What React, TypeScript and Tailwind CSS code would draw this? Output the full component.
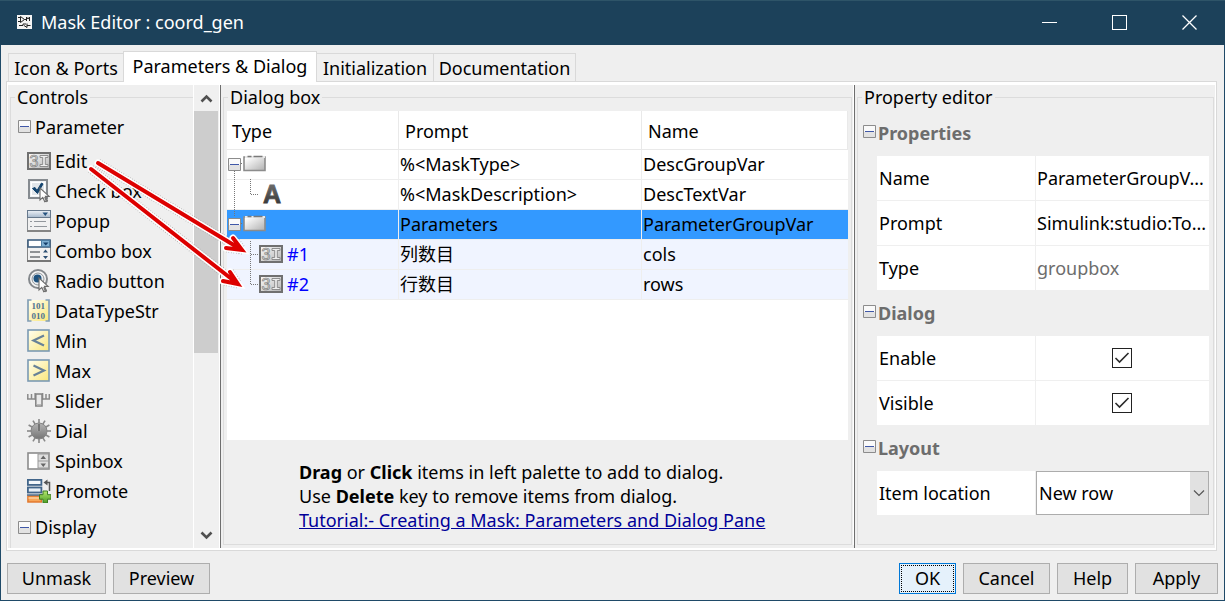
import React, { useState, type ReactNode } from "react";

function ToggleBox({ y = 0 }: { y?: number }) {
  return (
    <g>
      <rect x="0" y={y} width="13" height="13" rx="1" fill="#8c8c8c" />
      <rect x="1" y={y + 1} width="11" height="11" fill="#fafafa" />
      <rect x="1" y={y + 7} width="11" height="5" fill="#e2e2e2" />
      <rect x="2" y={y + 6} width="9" height="1" fill="#4058a8" />
    </g>
  );
}

function Toggle({ label }: { label: string }) {
  return (
    <button type="button" aria-label={label} className="block h-[13px] w-[13px] shrink-0">
      <svg width="13" height="13" viewBox="0 0 13 13" className="block">
        <ToggleBox />
      </svg>
    </button>
  );
}

function EditIcon() {
  return (
    <svg width="24" height="24" viewBox="0 0 24 24" className="block shrink-0">
      <defs>
        <linearGradient id="editFill" x1="0" y1="0" x2="1" y2="1">
          <stop offset="0" stopColor="#fbfbfb" />
          <stop offset="1" stopColor="#b4b4b4" />
        </linearGradient>
      </defs>
      <rect x="1" y="4" width="22" height="16" fill="url(#editFill)" stroke="#707070" strokeWidth="2" />
      <text
        x="2.5"
        y="17.500"
        fontSize="16"
        fontFamily="Liberation Sans, sans-serif"
        fill="#e4e4e4"
        stroke="#7d7d7d"
        strokeWidth="0.7"
      >
        3
      </text>
      <path d="M13 6.500h8v2h-2.700v7h2.700v2h-8v-2h2.700v-7H13z" fill="#eeeeee" stroke="#858585" strokeWidth="0.900" />
    </svg>
  );
}

function Cursor({ x, y }: { x: number; y: number }) {
  return (
    <g transform={`translate(${x} ${y})`}>
      <path d="M0 0v12l2.8-2.6 2 4.4 2.6-1.2-2-4.2h3.8z" fill="#fff" stroke="#6b6b6b" strokeWidth="1.1" />
      <path d="M5 9l2 5" stroke="#777" strokeWidth="2" />
    </g>
  );
}

function CheckIcon() {
  return (
    <svg width="24" height="24" viewBox="0 0 24 24" className="block shrink-0">
      <rect x="2" y="1" width="18" height="18" fill="#f0f3f5" stroke="#868b90" strokeWidth="2" />
      <rect x="4.5" y="3.5" width="13" height="13" fill="#e1e6ea" stroke="#fff" />
      <path d="M5.500 9.500l2.500-1 2 3L14.500 4l1.500 1L10.500 14.500z" fill="#15456f" stroke="#15456f" />
      <Cursor x={13} y={9} />
    </svg>
  );
}

function PopupIcon() {
  return (
    <svg width="24" height="24" viewBox="0 0 24 24" className="block shrink-0">
      <defs>
        <linearGradient id="popupBar" x1="0" y1="0" x2="0" y2="1">
          <stop offset="0" stopColor="#eef2f7" />
          <stop offset="1" stopColor="#a5b8cc" />
        </linearGradient>
      </defs>
      <rect x="0.500" y="1.500" width="23" height="21" fill="#f1f1f1" stroke="#8a8f94" />
      <rect x="0.5" y="1.5" width="23" height="7" fill="url(#popupBar)" stroke="#66788c" />
      <path d="M15.500 3.500h5.500l-2.700 3.500z" fill="#24527f" />
      <path d="M3 12.500h2M7 12.500h12M3 17.500h2M7 17.500h13" stroke="#92979c" />
      <path d="M0 22h24" stroke="#858585" strokeWidth="2" />
    </svg>
  );
}

function ComboIcon() {
  return (
    <svg width="24" height="24" viewBox="0 0 24 24" className="block shrink-0">
      <rect x="0.5" y="1.5" width="23" height="21" fill="#f1f1f1" stroke="#858585" />
      <rect x="1" y="1" width="22" height="7" fill="#fff" stroke="#3f5f80" strokeWidth="1.6" />
      <rect x="14.500" y="1.500" width="8" height="6" fill="#7fb0d3" stroke="#4e7ea4" />
      <path d="M16 3.500h5.500l-2.700 3z" fill="#153f6b" />
      <path d="M3 13h10M3 18h10" stroke="#6f7377" strokeWidth="1.6" />
      <path d="M16 13.500l2.500-3 2.500 3zM16 17l2.500 3 2.500-3z" fill="#2c4f73" />
      <path d="M0 22h24" stroke="#777" strokeWidth="2" />
    </svg>
  );
}

function RadioIcon() {
  return (
    <svg width="24" height="24" viewBox="0 0 24 24" className="block shrink-0">
      <circle cx="11" cy="10" r="9" fill="#f7f7f7" stroke="#84888c" strokeWidth="2" />
      <circle cx="11" cy="10" r="6" fill="#e9edf0" stroke="#8f9397" strokeWidth="1" />
      <circle cx="10.500" cy="9.500" r="4" fill="#1e527e" />
      <Cursor x={12} y={9} />
    </svg>
  );
}

function YellowGradient({ id }: { id: string }) {
  return (
    <defs>
      <linearGradient id={id} x1="0" y1="0" x2="1" y2="1">
        <stop offset="0" stopColor="#fffff2" />
        <stop offset="1" stopColor="#fbe77a" />
      </linearGradient>
    </defs>
  );
}

function DataTypeIcon() {
  return (
    <svg width="24" height="24" viewBox="0 0 24 24" className="block shrink-0">
      <YellowGradient id="dataFill" />
      <rect x="1" y="1" width="21" height="21" fill="url(#dataFill)" />
      <path d="M4.500 1H1v21h3.500M18.500 1H22v21h-3.500" fill="none" stroke="#839fb6" strokeWidth="1.700" />
      <text x="4.500" y="9.500" fontSize="9" fontWeight="700" fontFamily="Liberation Serif, serif" fill="#4d7391">
        101
      </text>
      <text x="4.500" y="19.500" fontSize="9" fontWeight="700" fontFamily="Liberation Serif, serif" fill="#4d7391">
        010
      </text>
    </svg>
  );
}

function LimitIcon({ kind }: { kind: "min" | "max" }) {
  const id = kind === "min" ? "minFill" : "maxFill";
  return (
    <svg width="24" height="24" viewBox="0 0 24 24" className="block shrink-0">
      <YellowGradient id={id} />
      <rect x="1" y="1" width="21" height="21" fill={`url(#${id})`} stroke="#7b9ab3" strokeWidth="1.600" />
      <path
        d={kind === "min" ? "M17 6.500L6.500 11.500 17 16.500" : "M6.500 6.500L17 11.500 6.500 16.500"}
        fill="none"
        stroke="#688298"
        strokeWidth="2.200"
      />
    </svg>
  );
}

function SliderIcon() {
  return (
    <svg width="24" height="24" viewBox="0 0 24 24" className="block shrink-0">
      <path d="M0.800 5v5M4.500 5v5M0 10h8M15 10h8M19 5v5M22.300 5v5" stroke="#8a8a8a" strokeWidth="1.500" fill="none" />
      <path d="M8 4v6.500M15.700 4v6.500" stroke="#8b8b8b" strokeWidth="1.300" />
      <rect x="8.800" y="5" width="6.200" height="12" fill="#eaeaea" stroke="#828282" strokeWidth="1.500" />
      <path d="M10 16h4" stroke="#aaa" strokeWidth="1.500" />
    </svg>
  );
}

function DialIcon() {
  const spokes = [0, 30, 60, 90, 120, 150, 180, 210, 240, 270, 300, 330];
  return (
    <svg width="24" height="24" viewBox="0 0 24 24" className="block shrink-0">
      <defs>
        <linearGradient id="dialFill" x1="0" y1="0" x2="0" y2="1">
          <stop offset="0" stopColor="#b4b4b4" />
          <stop offset="1" stopColor="#757575" />
        </linearGradient>
      </defs>
      {spokes.map((a) => (
        <path key={a} d="M12 0v5" stroke="#898989" strokeWidth="1.600" transform={`rotate(${a} 12 12)`} />
      ))}
      <circle cx="12" cy="12" r="8" fill="url(#dialFill)" stroke="#858585" />
      <path d="M10.500 5.500h3V12h-3z" fill="#a8a8a8" />
      <path d="M12 5v7" stroke="#5a5a5a" strokeWidth="1.300" />
    </svg>
  );
}

function SpinIcon() {
  return (
    <svg width="24" height="24" viewBox="0 0 24 24" className="block shrink-0">
      <rect x="1" y="4" width="21" height="16" fill="#fff" stroke="#8c8c8c" strokeWidth="1.600" />
      <rect x="11" y="5" width="10.500" height="14" fill="#dedede" stroke="#999" />
      <path d="M11 12h10.500" stroke="#999" />
      <path d="M13.500 10l2.800-3.500L19 10zM13.500 14.500l2.800 3.500 2.700-3.500z" fill="#666" />
    </svg>
  );
}

function PromoteIcon() {
  return (
    <svg width="24" height="24" viewBox="0 0 24 24" className="block shrink-0">
      <defs>
        <linearGradient id="plusFill" x1="0" y1="0" x2="0" y2="1">
          <stop offset="0" stopColor="#b5e86f" />
          <stop offset="1" stopColor="#4b9c24" />
        </linearGradient>
      </defs>
      <rect x="0.900" y="0.900" width="13.500" height="5" fill="#f3f7fb" stroke="#41658a" strokeWidth="1.800" />
      <rect x="0.900" y="8.500" width="13.500" height="5" fill="#e7eff7" stroke="#41658a" strokeWidth="1.800" />
      <rect x="0.900" y="17" width="13.500" height="6" fill="#f7a659" stroke="#e2762a" strokeWidth="1.400" />
      <path d="M0 16h15" stroke="#41658a" strokeWidth="1.400" />
      <path d="M1.500 19h12" stroke="#ffe1bd" />
      <path d="M19 3.500h3.500V12" fill="none" stroke="#555" strokeWidth="1.500" />
      <path d="M16.500 3.500l4-3v6z" fill="#555" />
      <path d="M16 12h4.500v3.700H24v4.500h-3.500V24H16v-3.800h-3.500v-4.500H16z" fill="url(#plusFill)" stroke="#3d7d22" />
    </svg>
  );
}

function FolderIcon() {
  return (
    <svg width="24" height="18" viewBox="0 0 24 18" className="block shrink-0">
      <defs>
        <linearGradient id="folderFill" x1="0" y1="0" x2="1" y2="1">
          <stop offset="0.100" stopColor="#ffffff" />
          <stop offset="1" stopColor="#b0b0b0" />
        </linearGradient>
      </defs>
      <path d="M1 2h21v13.500H1z" fill="url(#folderFill)" stroke="#8c8c8c" strokeWidth="1.600" />
      <path d="M2 2h20" stroke="#e8e8e8" strokeWidth="2" />
      <path d="M4.500 1.500h4M10.500 1.500h9" stroke="#7a7a7a" strokeWidth="1.600" />
    </svg>
  );
}

const palette: { label: string; icon: ReactNode }[] = [
  { label: "Edit", icon: <EditIcon /> },
  { label: "Check box", icon: <CheckIcon /> },
  { label: "Popup", icon: <PopupIcon /> },
  { label: "Combo box", icon: <ComboIcon /> },
  { label: "Radio button", icon: <RadioIcon /> },
  { label: "DataTypeStr", icon: <DataTypeIcon /> },
  { label: "Min", icon: <LimitIcon kind="min" /> },
  { label: "Max", icon: <LimitIcon kind="max" /> },
  { label: "Slider", icon: <SliderIcon /> },
  { label: "Dial", icon: <DialIcon /> },
  { label: "Spinbox", icon: <SpinIcon /> },
  { label: "Promote", icon: <PromoteIcon /> },
];

function TitleBar() {
  return (
    <header className="flex h-[45px] items-center border-t border-[#2e5468] bg-[#1c415a] pr-px pb-0.5 pl-[17px] text-white">
      <svg width="15" height="14" viewBox="0 0 15 14" className="block shrink-0">
        <rect width="15" height="14" fill="#f4f4f4" />
        <path
          d="M1 2.500h2M1 6.500h2M3.500 1.500l4 3-4 3zM7.500 4.500h2M9.500 6V2l1.500 2 1.500-2v4M2 10.500h4M6 10.500V9h3M10 8.500v4l-3-2M10 10.500h3.500"
          fill="none"
          stroke="#222"
        />
      </svg>
      <h1 className="ml-[9px] flex-1">Mask Editor : coord_gen</h1>
      <button type="button" aria-label="Minimize" className="flex h-full w-[70px] items-center justify-center">
        <svg width="15" height="15" viewBox="0 0 15 15">
          <path d="M0 7.500h15" stroke="#fff" />
        </svg>
      </button>
      <button type="button" aria-label="Maximize" className="flex h-full w-[70px] items-center justify-center">
        <svg width="15" height="15" viewBox="0 0 15 15">
          <rect x="0.500" y="0.500" width="14" height="14" fill="none" stroke="#fff" />
        </svg>
      </button>
      <button type="button" aria-label="Close" className="flex h-full w-[70px] items-center justify-center">
        <svg width="15" height="15" viewBox="0 0 15 15">
          <path d="M0.500 0.500l14 14M14.500 0.500l-14 14" stroke="#fff" strokeWidth="1.300" />
        </svg>
      </button>
    </header>
  );
}

const tabs = [
  { label: "Icon & Ports", width: "w-[115px]" },
  { label: "Parameters & Dialog", width: "w-[194px]" },
  { label: "Initialization", width: "w-[117px]" },
  { label: "Documentation", width: "w-[142px]" },
];

function TabBar() {
  return (
    <div role="tablist" className="relative z-10 -mb-px flex items-end pl-0.5">
      {tabs.map((tab, i) => (
        <button
          key={tab.label}
          type="button"
          role="tab"
          aria-selected={i === 1}
          className={`whitespace-nowrap ${tab.width} ${
            i === 1
              ? "h-[31px] border border-b-0 border-[#d9d9d9] bg-white pb-0.5"
              : `h-[29px] border-y border-[#d9d9d9] bg-[#f0f0f0] ${i === 0 ? "border-l" : "border-r"}`
          }`}
        >
          {tab.label}
        </button>
      ))}
    </div>
  );
}

function Controls() {
  return (
    <section className="flex w-[212px] shrink-0">
      <fieldset className="ml-0.5 min-w-0 flex-1 border-t border-l border-[#dcdcdc]">
        <legend className="ml-1 px-0.5">Controls</legend>
        <div className="flex h-[37px] items-center gap-1 pb-0.5 pl-[7px]">
          <Toggle label="Collapse Parameter" />
          Parameter
        </div>
        <ul>
          {palette.map((item) => (
            <li key={item.label} className="flex h-[30px] items-center pl-4">
              <button type="button" className="flex items-center gap-1 whitespace-nowrap">
                {item.icon}
                {item.label}
              </button>
            </li>
          ))}
        </ul>
        <div className="flex h-[42px] items-center gap-1 pl-[7px]">
          <Toggle label="Collapse Display" />
          Display
        </div>
      </fieldset>
      <div className="flex w-[27px] flex-col border-x border-white bg-[#f0f0f0] pr-px">
        <button type="button" aria-label="Scroll up" className="flex h-[26px] items-center justify-center">
          <svg width="13" height="9" viewBox="0 0 13 9">
            <path d="M1.500 7.500l5-5 5 5" fill="none" stroke="#505050" strokeWidth="2.600" />
          </svg>
        </button>
        <div className="flex-1">
          <div className="h-[59%] bg-[#cdcdcd]" />
        </div>
        <button type="button" aria-label="Scroll down" className="flex h-[26px] items-center justify-center">
          <svg width="13" height="9" viewBox="0 0 13 9">
            <path d="M1.500 1.500l5 5 5-5" fill="none" stroke="#505050" strokeWidth="2.600" />
          </svg>
        </button>
      </div>
    </section>
  );
}

function GroupToggle({ up, down, label }: { up?: boolean; down?: boolean; label: string }) {
  return (
    <button type="button" aria-label={label} className="block h-[29px] w-[15px] shrink-0">
      <svg width="15" height="29" viewBox="0 0 15 29" className="block">
        {up && <path d="M6.500 0v8" stroke="#777" strokeDasharray="1 1" />}
        {down && <path d="M6.500 22v7" stroke="#777" strokeDasharray="1 1" />}
        <path d="M13 14.500h2" stroke="#777" strokeDasharray="1 1" />
        <ToggleBox y={9} />
      </svg>
    </button>
  );
}

function Branch({ trunk, more }: { trunk?: boolean; more?: boolean }) {
  return (
    <svg width="31" height="30" viewBox="0 0 31 30" className="block shrink-0">
      {trunk && <path d="M6.500 0v30" stroke="#777" strokeDasharray="1 1" />}
      <path d={more ? "M22.500 2v28" : "M22.500 0v15"} stroke="#777" strokeDasharray="1 1" />
      <path d="M23 15.500h8" stroke="#777" strokeDasharray="1 1" />
    </svg>
  );
}

const rows: { type: ReactNode; prompt: string; name: string; tone: string }[] = [
  {
    type: (
      <>
        <GroupToggle down label="Collapse DescGroupVar" />
        <FolderIcon />
      </>
    ),
    prompt: "%<MaskType>",
    name: "DescGroupVar",
    tone: "bg-white",
  },
  {
    type: (
      <>
        <Branch trunk />
        <svg width="26" height="30" viewBox="0 0 26 30" className="block shrink-0 overflow-visible">
          <defs>
            <linearGradient id="letterFill" x1="0" y1="0" x2="0" y2="1">
              <stop offset="0" stopColor="#777" />
              <stop offset="1" stopColor="#2e2e2e" />
            </linearGradient>
          </defs>
          <text
            x="4"
            y="24"
            fontSize="25"
            fontWeight="700"
            fontFamily="Liberation Sans, sans-serif"
            fill="url(#letterFill)"
            stroke="url(#letterFill)"
            strokeWidth="0.800"
          >
            A
          </text>
        </svg>
      </>
    ),
    prompt: "%<MaskDescription>",
    name: "DescTextVar",
    tone: "bg-white",
  },
  {
    type: (
      <>
        <GroupToggle up label="Collapse ParameterGroupVar" />
        <FolderIcon />
      </>
    ),
    prompt: "Parameters",
    name: "ParameterGroupVar",
    tone: "bg-[#3399ff]",
  },
  {
    type: (
      <>
        <Branch more />
        <EditIcon />
        <span className="ml-1 text-[#0000ff]">#1</span>
      </>
    ),
    prompt: "列数目",
    name: "cols",
    tone: "bg-[#f0f4ff]",
  },
  {
    type: (
      <>
        <Branch />
        <EditIcon />
        <span className="ml-1 text-[#0000ff]">#2</span>
      </>
    ),
    prompt: "行数目",
    name: "rows",
    tone: "bg-[#f0f4ff]",
  },
];

function DialogBox() {
  return (
    <section className="flex min-w-0 flex-1 border-l border-[#6e6e6e] pb-[3px] pl-0.5">
      <fieldset className="flex min-w-0 flex-1 flex-col border border-[#dcdcdc] px-[3px]">
        <legend className="ml-px px-0.5">Dialog box</legend>
        <div className="mt-0.5 h-[329px] bg-white">
          <table className="w-full table-fixed border-separate border-spacing-0 text-left">
            <colgroup>
              <col className="w-[172px]" />
              <col className="w-[243px]" />
              <col />
            </colgroup>
            <thead>
              <tr className="h-[39px]">
                {["Type", "Prompt", "Name"].map((h, i) => (
                  <th
                    key={h}
                    scope="col"
                    className={`border-r border-b border-[#e9e9e9] p-0 pt-0.5 font-normal ${i === 0 ? "pl-[5px]" : "pl-1.5"}`}
                  >
                    {h}
                  </th>
                ))}
              </tr>
            </thead>
            <tbody>
              {rows.map((row) => (
                <tr key={row.name} className={`h-[30px] ${row.tone}`}>
                  <td className="border-r border-b border-[#eeeeee] p-0">
                    <div className="flex h-[29px] items-center pb-0.5 pl-px">{row.type}</div>
                  </td>
                  <td className="border-r border-b border-[#eeeeee] p-0 pb-0.5 pl-px leading-6">{row.prompt}</td>
                  <td className="border-b border-[#eeeeee] p-0 pb-0.5 pl-px leading-6">{row.name}</td>
                </tr>
              ))}
            </tbody>
          </table>
        </div>
        <div className="mt-5 pl-[72px]">
          <p>
            <b>Drag</b> or <b>Click</b> items in left palette to add to dialog.
          </p>
          <p>
            Use <b>Delete</b> key to remove items from dialog.
          </p>
          <a href="#tutorial" className="text-[#000099] underline">
            Tutorial:- Creating a Mask: Parameters and Dialog Pane
          </a>
        </div>
      </fieldset>
      <div className="ml-px w-px bg-white" />
    </section>
  );
}

function PropertyGroup({ title, children }: { title: string; children: ReactNode }) {
  return (
    <div>
      <div className="flex h-[46px] items-start gap-0.5 pt-[11px] pl-[5px]">
        <span className="pt-1">
          <Toggle label={`Collapse ${title}`} />
        </span>
        <h2 className="font-bold text-[#6d6d6d]">{title}</h2>
      </div>
      <div className="mr-[4px] ml-[19px] grid gap-px">{children}</div>
    </div>
  );
}

function PropertyRow({ label, htmlFor, children }: { label: string; htmlFor?: string; children: ReactNode }) {
  return (
    <div className="grid h-11 grid-cols-[158px_minmax(0,1fr)] gap-px">
      <label htmlFor={htmlFor} className="flex items-center bg-white pl-0.5">
        {label}
      </label>
      <div className="flex items-center bg-white">{children}</div>
    </div>
  );
}

function Tick({ id }: { id: string }) {
  const [on, setOn] = useState(true);
  return (
    <span className="mx-auto grid place-items-center pr-px">
      <input
        id={id}
        type="checkbox"
        checked={on}
        onChange={(e) => setOn(e.target.checked)}
        className="col-start-1 row-start-1 h-5 w-5 appearance-none border border-[#222222] bg-white"
      />
      {on && (
        <svg width="16" height="12" viewBox="0 0 16 12" className="pointer-events-none col-start-1 row-start-1">
          <path d="M1.500 6l4 4L14.500 1" fill="none" stroke="#2b2b2b" strokeWidth="1.600" />
        </svg>
      )}
    </span>
  );
}

function PropertyEditor() {
  return (
    <section className="flex w-[361px] shrink-0 border-l border-[#6e6e6e] pr-px pb-[3px] pl-0.5">
      <fieldset className="min-w-0 flex-1 border border-[#dcdcdc] pt-px">
        <legend className="ml-1 px-0.5">Property editor</legend>
        <PropertyGroup title="Properties">
          <PropertyRow label="Name">
            <span className="pl-px whitespace-nowrap">ParameterGroupV...</span>
          </PropertyRow>
          <PropertyRow label="Prompt">
            <span className="pl-px whitespace-nowrap">Simulink:studio:To...</span>
          </PropertyRow>
          <PropertyRow label="Type">
            <span className="pl-px text-[#6d6d6d]">groupbox</span>
          </PropertyRow>
        </PropertyGroup>
        <PropertyGroup title="Dialog">
          <PropertyRow label="Enable" htmlFor="enable">
            <Tick id="enable" />
          </PropertyRow>
          <PropertyRow label="Visible" htmlFor="visible">
            <Tick id="visible" />
          </PropertyRow>
        </PropertyGroup>
        <PropertyGroup title="Layout">
          <PropertyRow label="Item location" htmlFor="location">
            <span className="relative flex h-full w-full">
              <select id="location" className="h-full w-full appearance-none border border-[#acacac] bg-white pl-0.5">
                <option>New row</option>
                <option>Current row</option>
              </select>
              <span className="pointer-events-none absolute inset-y-px right-px flex w-[18px] items-center justify-center bg-[#e1e1e1]">
                <svg width="12" height="8" viewBox="0 0 12 8">
                  <path d="M1 1.500l5 5 5-5" fill="none" stroke="#555" strokeWidth="1.200" />
                </svg>
              </span>
            </span>
          </PropertyRow>
        </PropertyGroup>
      </fieldset>
    </section>
  );
}

const plainButton = "h-[31px] border border-[#adadad] bg-[#e1e1e1] pb-0.5";

function Footer() {
  return (
    <footer className="flex gap-[7px] px-1.5 pt-3 pb-1.5">
      <button type="button" className={`${plainButton} w-[99px]`}>
        Unmask
      </button>
      <button type="button" className={`${plainButton} w-[97px]`}>
        Preview
      </button>
      <button type="button" className="ml-auto h-[31px] w-[57px] border border-[#0078d7] bg-[#e5f1fb] p-px">
        <span className="flex h-full items-center justify-center border border-dotted border-black pb-0.5">OK</span>
      </button>
      <button type="button" className={`${plainButton} w-[87px]`}>
        Cancel
      </button>
      <button type="button" className={`${plainButton} w-[71px]`}>
        Help
      </button>
      <button type="button" className={`${plainButton} w-[83px]`}>
        Apply
      </button>
    </footer>
  );
}

const arrowPaths = ["M98 163L242 250M233 238L242 250L226 248", "M91 169L238 284M230 272L238 284L223 281"];

function Arrows() {
  return (
    <svg
      width="260"
      height="300"
      viewBox="0 0 260 300"
      className="pointer-events-none absolute top-0 left-0 z-20"
      fill="none"
      strokeLinecap="round"
    >
      {arrowPaths.map((d) => (
        <g key={d}>
          <path d={d} stroke="#999" strokeWidth="9" strokeDasharray="0.500 2" strokeLinecap="butt" />
          <path d={d} stroke="#fff" strokeWidth="7" />
          <path d={d} stroke="#dd0000" strokeWidth="4" />
        </g>
      ))}
    </svg>
  );
}

export default function App() {
  return (
    <div className="relative flex min-h-screen flex-col bg-[#efefef] font-['Noto_Sans','Noto_Sans_CJK_SC',sans-serif] text-[18px] leading-6 text-black">
      <TitleBar />
      <main className="flex flex-1 flex-col border-x border-b border-[#1f4a68] pt-1.5">
        <div className="flex flex-1 flex-col pr-[7px] pl-[5px]">
          <TabBar />
          <div className="flex flex-1 border border-[#d9d9d9] bg-white px-px pt-[3px] pb-0.5">
            <div className="flex min-w-0 flex-1 bg-[#efefef]">
              <Controls />
              <DialogBox />
              <PropertyEditor />
            </div>
          </div>
        </div>
        <Footer />
      </main>
      <Arrows />
    </div>
  );
}
